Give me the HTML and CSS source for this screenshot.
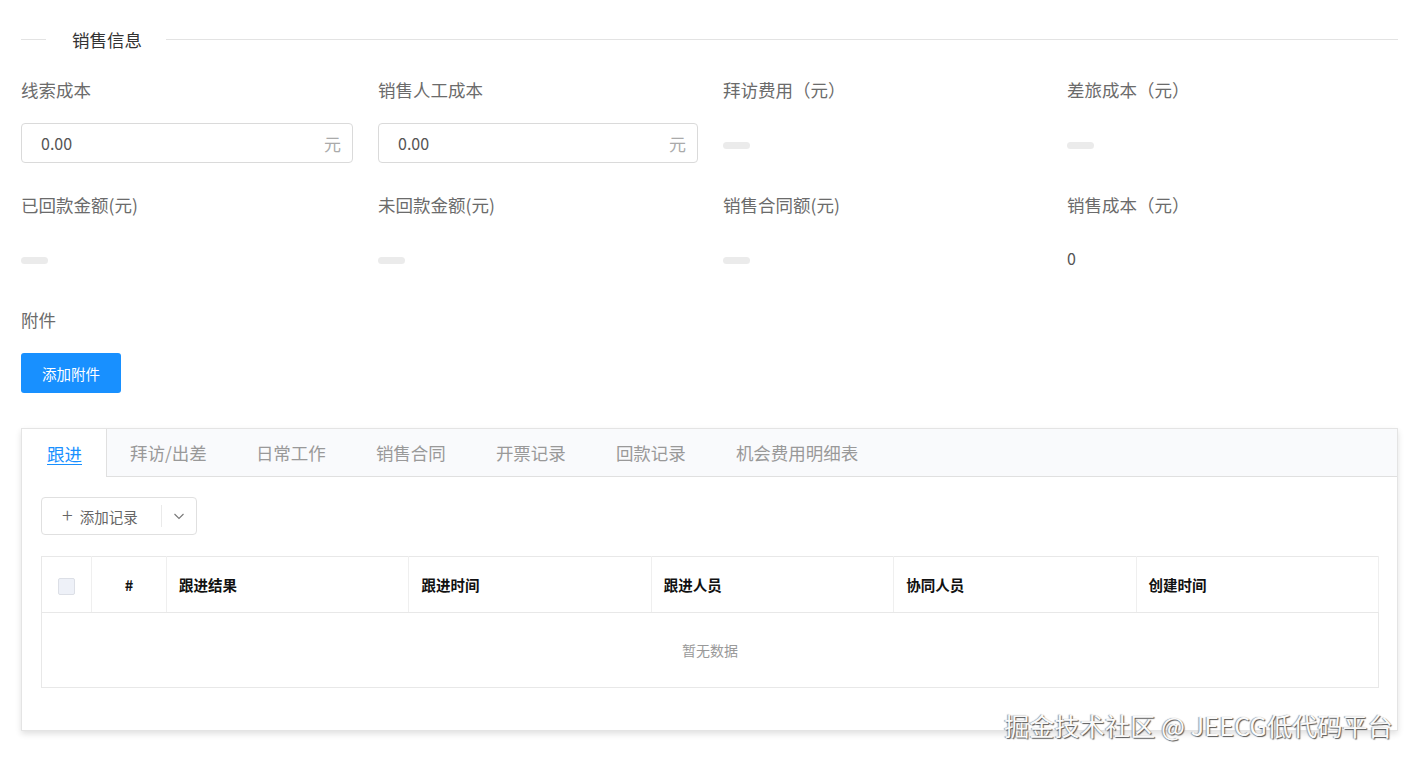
FILE: index.html
```html
<!DOCTYPE html>
<html lang="zh-CN">
<head>
    <meta charset="UTF-8">
    <meta name="viewport" content="width=device-width, initial-scale=1.0">
    <title>销售信息</title>
    <link rel="stylesheet" href="styles.css">
</head>
<body>

    <div class="page">
        <!-- 标题分割线 -->
        <div class="divider">
            <span class="divider-line short"></span>
            <span class="divider-text">销售信息</span>
            <span class="divider-line"></span>
        </div>

        <!-- 表单字段 -->
        <div class="fields">
            <div class="field">
                <label>线索成本</label>
                <div class="input-box"><span class="input-val">0.00</span><span class="suffix">元</span></div>
            </div>
            <div class="field">
                <label>销售人工成本</label>
                <div class="input-box narrow"><span class="input-val">0.00</span><span class="suffix">元</span></div>
            </div>
            <div class="field">
                <label>拜访费用（元）</label>
                <div class="value"><span class="skeleton"></span></div>
            </div>
            <div class="field">
                <label>差旅成本（元）</label>
                <div class="value"><span class="skeleton"></span></div>
            </div>

            <div class="field">
                <label>已回款金额(元)</label>
                <div class="value"><span class="skeleton"></span></div>
            </div>
            <div class="field">
                <label>未回款金额(元)</label>
                <div class="value"><span class="skeleton"></span></div>
            </div>
            <div class="field">
                <label>销售合同额(元)</label>
                <div class="value"><span class="skeleton"></span></div>
            </div>
            <div class="field">
                <label>销售成本（元）</label>
                <div class="value">0</div>
            </div>

            <div class="field">
                <label>附件</label>
                <div class="value"><button class="btn-primary">添加附件</button></div>
            </div>
        </div>

        <!-- 标签页 -->
        <div class="tab-card">
            <div class="tab-bar">
                <div class="tab active"><span>跟进</span></div>
                <div class="tab tight">拜访/出差</div>
                <div class="tab">日常工作</div>
                <div class="tab">销售合同</div>
                <div class="tab">开票记录</div>
                <div class="tab">回款记录</div>
                <div class="tab">机会费用明细表</div>
            </div>

            <div class="tab-body">
                <div class="btn-split">
                    <span class="btn-main"><span class="plus">+</span>添加记录</span>
                    <span class="btn-sep"></span>
                    <span class="btn-arrow">
                        <svg width="12" height="12" viewBox="0 0 12 12"><path d="M1.5 4 L6 8.5 L10.5 4" fill="none" stroke="#777" stroke-width="1.1"/></svg>
                    </span>
                </div>

                <table class="grid">
                    <thead>
                        <tr>
                            <th class="col-check"><span class="checkbox"></span></th>
                            <th class="col-num">#</th>
                            <th>跟进结果</th>
                            <th>跟进时间</th>
                            <th>跟进人员</th>
                            <th>协同人员</th>
                            <th>创建时间</th>
                        </tr>
                    </thead>
                    <tbody>
                        <tr>
                            <td colspan="7" class="empty">暂无数据</td>
                        </tr>
                    </tbody>
                </table>
            </div>
        </div>

        <div class="watermark">掘金技术社区 @ JEECG低代码平台</div>
    </div>

</body>
</html>
```

FILE: styles.css
```css
/* Estilos generales */
body {
    margin: 0;
    background: #fff;
    font-family: "Noto Sans CJK SC", "Liberation Sans", sans-serif;
    color: #333;
}

.page {
    position: relative;
    padding: 20px 17px 0 21px;
    height: 743px;
}

/* Divisor con título */
.divider {
    display: flex;
    align-items: center;
    height: 38px;
    margin-bottom: 20px;
}

.divider-line {
    flex: 1;
    height: 1px;
    background: #e3e3e3;
}

.divider-line.short {
    flex: 0 0 25px;
}

.divider-text {
    padding: 0 24px 0 26px;
    font-size: 17.5px;
    color: #333;
}

/* Campos */
.fields {
    display: grid;
    grid-template-columns: 357px 345px 344px 1fr;
    row-gap: 30px;
}

.field label {
    display: block;
    height: 24px;
    line-height: 24px;
    margin-bottom: 21px;
    font-size: 17.5px;
    color: #6b6b6b;
}

.input-box {
    display: flex;
    align-items: center;
    justify-content: space-between;
    box-sizing: border-box;
    width: 332px;
    height: 40px;
    padding: 0 11px 0 19px;
    border: 1px solid #dadada;
    border-radius: 4px;
    font-size: 16px;
}

.input-box.narrow {
    width: 320px;
}

.input-val {
    color: #555;
}

.suffix {
    color: #aaa;
    font-size: 17px;
}

.value {
    height: 40px;
    display: flex;
    align-items: center;
    font-size: 16px;
    color: #555;
}

.skeleton {
    display: inline-block;
    width: 27px;
    height: 7px;
    margin-top: 4px;
    border-radius: 4px;
    background: #ebebeb;
}

.btn-primary {
    width: 100px;
    height: 40px;
    border: none;
    border-radius: 3px;
    background: #1890ff;
    color: #fff;
    font-family: inherit;
    font-size: 14.5px;
    cursor: pointer;
}

/* Tarjeta con pestañas */
.tab-card {
    margin-top: 35px;
    border: 1px solid #e4e4e4;
    box-shadow: 0 3px 6px rgba(0, 0, 0, 0.12);
}

.tab-bar {
    display: flex;
    height: 47px;
    background: #f9fafc;
    border-bottom: 1px solid #e0e0e0;
}

.tab {
    display: flex;
    align-items: center;
    padding: 0 25px;
    font-size: 17.5px;
    color: #999;
}

.tab.tight {
    padding: 0 24px 0 23px;
}

.tab.active {
    padding: 0 24px 0 25px;
    margin-bottom: -1px;
    background: #fff;
    border-right: 1px solid #e0e0e0;
    color: #1890ff;
}

.tab.active span {
    text-decoration: underline;
    text-underline-offset: 3px;
}

.tab-body {
    padding: 20px 19px 42px 19px;
}

/* Botón dividido */
.btn-split {
    display: inline-flex;
    align-items: center;
    box-sizing: border-box;
    width: 156px;
    height: 38px;
    border: 1px solid #e0e0e0;
    border-radius: 4px;
    font-size: 14.5px;
    color: #666;
}

.btn-main {
    display: flex;
    align-items: center;
    padding-left: 20px;
    width: 99px;
}

.plus {
    font-size: 20px;
    font-weight: 300;
    margin-right: 7px;
    line-height: 1;
    margin-top: -2px;
}

.btn-sep {
    width: 1px;
    height: 22px;
    background: #eaeaea;
}

.btn-arrow {
    display: flex;
    flex: 1;
    justify-content: center;
}

/* Tabla */
.grid {
    width: 1338px;
    margin-top: 21px;
    border-collapse: collapse;
    table-layout: fixed;
    border: 1px solid #e8e8e8;
}

.grid th {
    height: 55px;
    padding: 0 12px;
    text-align: left;
    font-size: 14.5px;
    font-weight: bold;
    color: #111;
    border-right: 1px solid #efefef;
    border-bottom: 1px solid #e8e8e8;
}

.grid th.col-check {
    width: 25px;
    text-align: center;
}

.grid th.col-num {
    width: 50px;
    text-align: center;
}

.checkbox {
    display: inline-block;
    width: 15px;
    height: 15px;
    border: 1px solid #dcdfe6;
    border-radius: 2px;
    background: #eef1f8;
    vertical-align: middle;
}

.empty {
    height: 72px;
    text-align: center;
    font-size: 14px;
    color: #999;
}

/* Marca de agua */
.watermark {
    position: absolute;
    right: 22px;
    top: 707px;
    font-size: 25px;
    letter-spacing: 0.2px;
    color: #fafafa;
    text-shadow: 1px 1px 1px #555, -1px 0 1px #999;
    white-space: nowrap;
}
```
